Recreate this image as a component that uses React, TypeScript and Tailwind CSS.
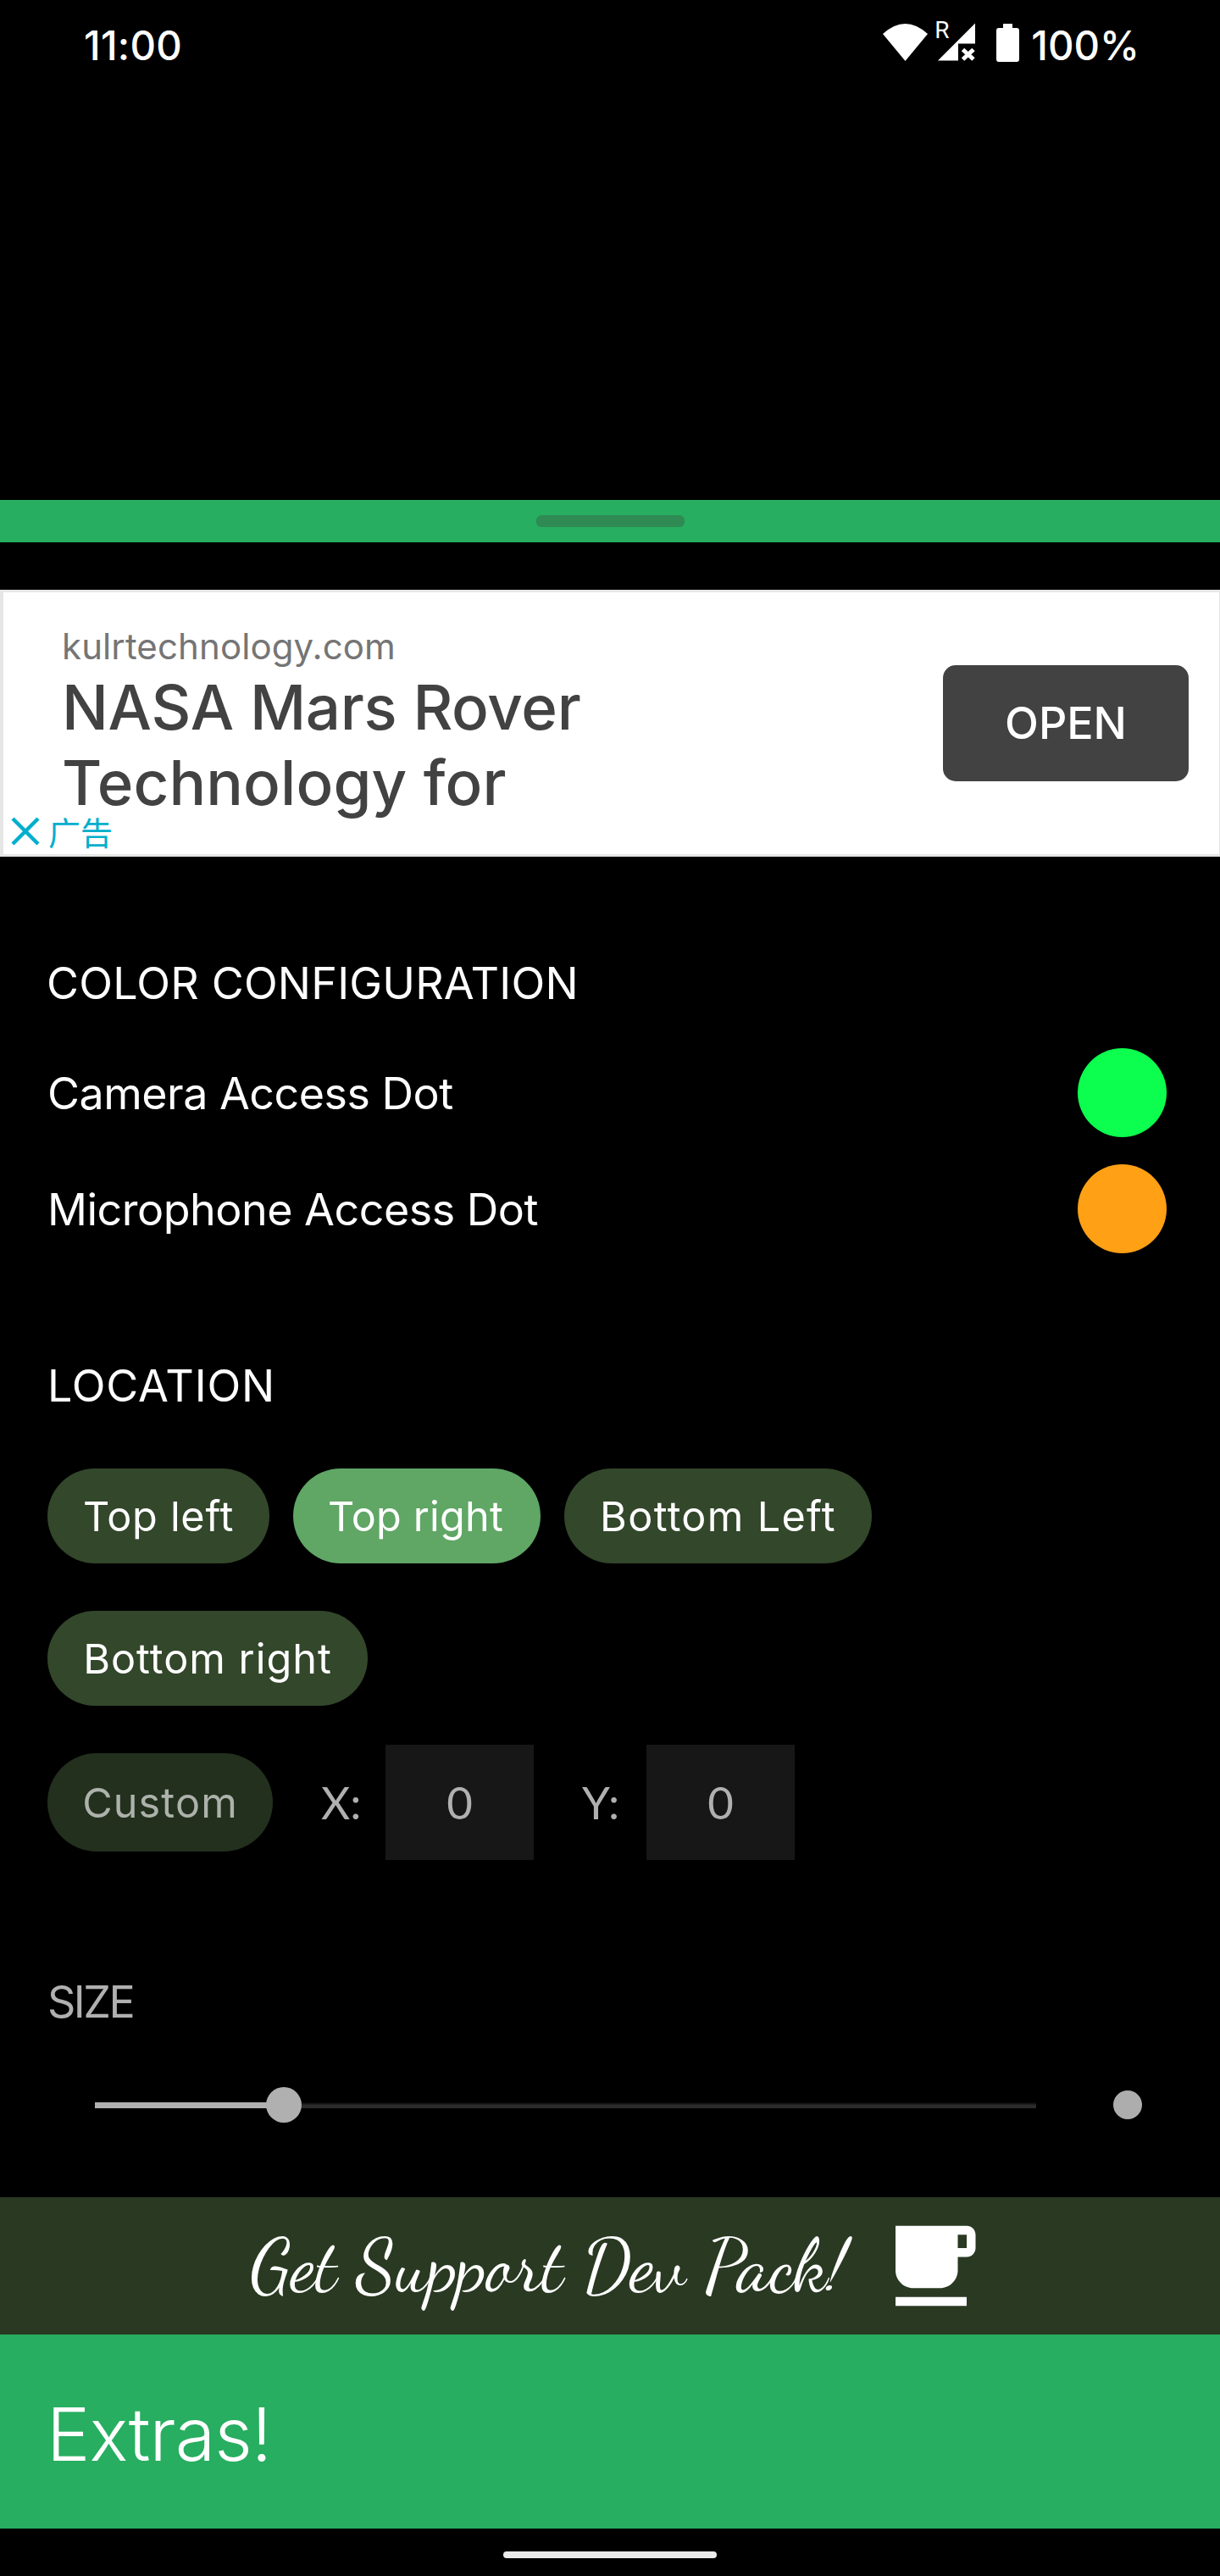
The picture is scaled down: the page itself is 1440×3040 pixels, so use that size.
import type { ReactNode } from 'react';

function StatusBar() {
  return (
    <header className="flex h-[106px] items-center justify-between pr-[95px] pl-[99px] font-medium text-white">
      <span className="pt-[1px] text-[47.3px] leading-none tracking-[0.3px]">11:00</span>
      <div className="flex items-center">
        <svg className="mt-[-6px] h-[44px] w-[53px]" viewBox="0 0 53 44" fill="currentColor" aria-hidden="true">
          <path d="M0 12Q26.5-12 53 12L26.5 44Z" />
        </svg>
        <div className="relative mt-[-6px] ml-[12px]">
          <svg className="h-[45px] w-[44px]" viewBox="0 0 44 45" aria-hidden="true">
            <path d="M44 .5V24.5H24V44.5H0Z" fill="currentColor" />
            <path d="M29.5 31.5L42 43M42 31.5L29.5 43" stroke="currentColor" strokeWidth="5" />
          </svg>
          <span className="absolute top-[-5px] left-[-4px] font-[Roboto] text-[28px] leading-[28px] font-normal">R</span>
        </div>
        <svg className="mt-[-5px] ml-[25px] h-[45px] w-[27px]" viewBox="0 0 27 45" fill="currentColor" aria-hidden="true">
          <path d="M8 0H19V5H24Q27 5 27 8V42Q27 45 24 45H3Q0 45 0 42V8Q0 5 3 5H8Z" />
        </svg>
        <span className="ml-[14px] pt-[1px] text-[47.3px] leading-none">100%</span>
      </div>
    </header>
  );
}

function AdBanner() {
  return (
    <section className="relative mt-[56px] flex h-[315px] items-center justify-between border-y-[3px] border-r border-l-4 border-[#e6e6e6] bg-white pr-[36px] pl-[69px]">
      <div className="self-start pt-[37px]">
        <div className="text-[42px] leading-[54px] tracking-[0.1px] text-[#757575]">kulrtechnology.com</div>
        <div className="pt-[1px] text-[72.6px] leading-[89px] font-medium tracking-[-0.3px] text-[#424242]">
          <div>NASA Mars Rover</div>
          <div className="tracking-[0.1px]">Technology for</div>
        </div>
      </div>
      <button className="h-[137px] w-[290px] rounded-[15px] bg-[#424242] text-[52px] leading-none font-medium text-white">OPEN</button>
      <div className="absolute bottom-[8px] left-[8px] flex items-center text-[#00aecd]">
        <svg className="h-[36px] w-[36px]" viewBox="0 0 36 36" stroke="currentColor" strokeWidth="4.5" aria-hidden="true">
          <path d="M3 3L33 33M33 3L3 33" />
        </svg>
        <span className="ml-[9px] font-['Noto_Sans_CJK_SC',sans-serif] text-[38px] leading-[38px]">广告</span>
      </div>
    </section>
  );
}

function ColorRow({ label, children }: { label: string; children: ReactNode }) {
  return (
    <div className="flex h-[137px] items-center justify-between pr-[63px] pl-[56px]">
      <span className="pt-[2px] text-[52px] leading-none tracking-[-0.5px]">{label}</span>
      {children}
    </div>
  );
}

const chip = 'flex h-[112px] items-center justify-center rounded-full pt-[3px] text-[48.6px] leading-none';

function Coordinate({ label }: { label: string }) {
  return (
    <div className="flex items-center font-[Lato] text-[52.8px] leading-none text-[#b0b0b0]">
      <span className="w-[76px]">{label}</span>
      <div className="flex h-[136px] w-[175px] items-center justify-center bg-[#171717]">0</div>
    </div>
  );
}

function SizeSlider() {
  return (
    <div className="mt-[41px] flex h-[82px] items-center pr-[92px] pl-[112px]">
      <div className="relative flex h-[42px] w-[1111px] items-center">
        <div className="h-[7px] w-[223px] bg-[#b0b0b0]" />
        <div className="mt-[-2px] h-[9px] flex-1 bg-linear-to-b from-black to-[#2b2b2b] to-60%" />
        <div className="absolute top-0 left-[202px] h-[42px] w-[42px] rounded-full bg-[#b0b0b0]" />
      </div>
      <div className="ml-auto h-[34px] w-[34px] rounded-full bg-[#adadad]" />
    </div>
  );
}

export default function App() {
  return (
    <div className="h-[3040px] w-[1440px] overflow-hidden bg-black font-[Inter,sans-serif] text-white">
      <StatusBar />
      <div className="mt-[484px] flex h-[50px] items-center justify-center bg-[#27ae60]">
        <div className="h-[14px] w-[175px] rounded-[6px] bg-[#2f8a54]" />
      </div>
      <AdBanner />

      <h2 className="mt-[110px] pl-[55px] text-[52px] leading-[80px] tracking-[0.2px]">COLOR CONFIGURATION</h2>
      <div className="mt-[20px]">
        <ColorRow label="Camera Access Dot">
          <div className="h-[105px] w-[105px] rounded-full bg-[#0cff4e]" />
        </ColorRow>
        <ColorRow label="Microphone Access Dot">
          <div className="h-[105px] w-[105px] rounded-full bg-[#ffa015]" />
        </ColorRow>
      </div>

      <h2 className="mt-[101px] pl-[56px] text-[52px] leading-[80px] tracking-[0.8px]">LOCATION</h2>
      <div className="mt-[57px] flex flex-wrap gap-x-[28px] gap-y-[56px] pl-[56px]">
        <button className={`${chip} w-[262px] bg-[#33472b] tracking-[0.7px]`}>Top left</button>
        <button className={`${chip} w-[292px] bg-[#60a665] pr-[3px] tracking-[0.2px]`}>Top right</button>
        <button className={`${chip} w-[363px] bg-[#33472b] tracking-[1.3px]`}>Bottom Left</button>
        <div className="w-full">
          <button className={`${chip} w-[378px] bg-[#33472b] tracking-[1px]`}>Bottom right</button>
        </div>
      </div>
      <div className="mt-[46px] flex h-[136px] items-center gap-[57px] pl-[56px]">
        <button className="flex h-[116px] w-[266px] items-center justify-center rounded-full bg-[#22301d] pt-[3px] text-[48.6px] leading-none tracking-[1.1px] text-[#adb1ab]">
          Custom
        </button>
        <Coordinate label="X:" />
        <Coordinate label="Y:" />
      </div>

      <h2 className="mt-[128px] pl-[56px] text-[52px] leading-[80px] tracking-[-2.5px] text-[#b0b0b0]">SIZE</h2>
      <div className="mt-[-1px]">
        <SizeSlider />
      </div>

      <div className="mt-[68px] flex h-[162px] items-center bg-[#293922] pl-[295px]">
        <span className="font-['Dancing_Script',cursive] text-[87.5px] leading-[110px] whitespace-nowrap">Get Support Dev Pack!</span>
        <svg className="ml-auto mr-[278px] h-[126px] w-[126px]" viewBox="0 0 24 24" fill="currentColor" aria-hidden="true">
          <path d="M20 3H4v10c0 2.21 1.79 4 4 4h6c2.21 0 4-1.79 4-4v-3h2c1.11 0 2-.9 2-2V5c0-1.11-.89-2-2-2zm0 5h-2V5h2v3zM4 19h16v2H4z" />
        </svg>
      </div>
      <div className="flex h-[229px] items-center bg-[#27ae60] pt-[8px] pl-[55px]">
        <span className="text-[86.3px] leading-none font-light tracking-[-0.9px]">Extras!</span>
      </div>
      <div className="flex h-[56px] items-center justify-center">
        <div className="mt-[6px] h-[8px] w-[252px] rounded-full bg-[#ebebeb]" />
      </div>
    </div>
  );
}
